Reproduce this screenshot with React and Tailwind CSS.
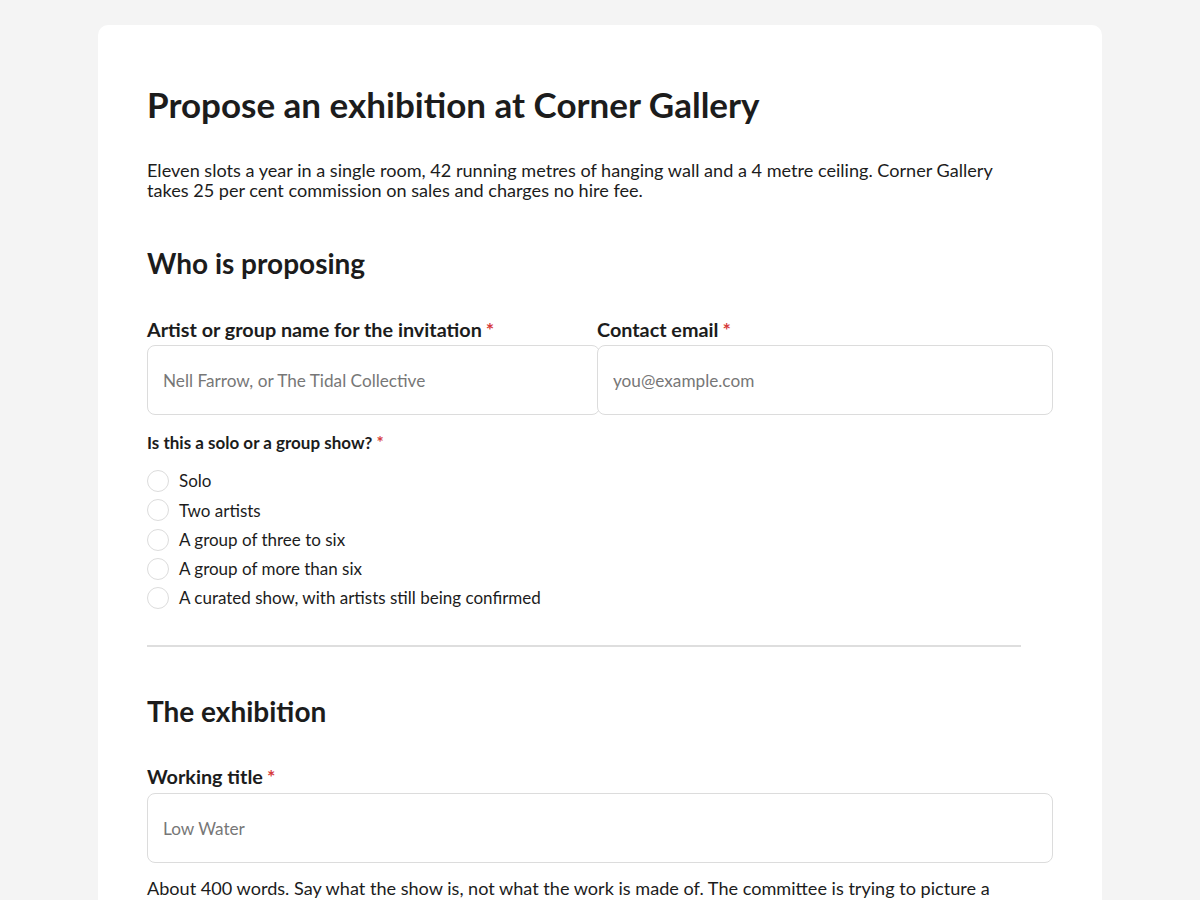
import React from "react";

function Req() {
  return <span className="text-[#d63b3b] ml-1">*</span>;
}

function Field({ label, placeholder, className, gapClass = "mb-[4px]" }) {
  return (
    <div className={className}>
      <label className={`block text-[19.8px] font-bold leading-[23px] ${gapClass}`}>
        {label}
        <Req />
      </label>
      <input
        type="text"
        placeholder={placeholder}
        className="block w-full h-[70px] rounded-[8px] border border-[#dcdcdc] bg-white px-[15px] text-[17.2px] text-[#1c1c1c] placeholder:text-[#777777] focus:outline-none"
      />
    </div>
  );
}

const options = [
  "Solo",
  "Two artists",
  "A group of three to six",
  "A group of more than six",
  "A curated show, with artists still being confirmed",
];

function App() {
  return (
    <div
      className="min-h-screen bg-[#f4f4f4] pt-[25px] text-[#1c1c1c]"
      style={{ fontFamily: "Lato, 'Liberation Sans', sans-serif" }}
    >
      <div className="mx-auto w-[1004px] rounded-[10px] bg-white px-[49px] pt-[58px] pb-16 min-h-[900px]">
        <h1 className="text-[35px] font-bold leading-[42px]">
          Propose an exhibition at Corner Gallery
        </h1>
        <p className="mt-[35px] max-w-[874px] text-[18.1px] leading-[20px]">
          Eleven slots a year in a single room, 42 running metres of hanging wall and a 4 metre ceiling. Corner
          Gallery takes 25 per cent commission on sales and charges no hire fee.
        </p>

        <h2 className="mt-[45px] text-[28px] font-bold leading-[36px]">
          Who is proposing
        </h2>

        <div className="mt-[37px] flex">
          <Field
            className="w-[450px] [&_input]:w-[453px] [&_input]:relative"
            label="Artist or group name for the invitation"
            placeholder="Nell Farrow, or The Tidal Collective"
          />
          <Field
            className="flex-1 relative z-10"
            label="Contact email"
            placeholder="you@example.com"
          />
        </div>

        <fieldset className="mt-[18px]">
          <legend className="text-[17px] font-bold leading-[20px]">
            Is this a solo or a group show?
            <Req />
          </legend>
          <div className="mt-[17px] flex flex-col gap-[7.3px]">
            {options.map((o) => (
              <label key={o} className="flex items-center gap-[10px] h-[22px] text-[17px]">
                <span className="w-[22px] h-[22px] rounded-full border border-[#dcdcdc] bg-white shrink-0" />
                {o}
              </label>
            ))}
          </div>
        </fieldset>

        <div className="mt-[36px] h-[2px] w-[874px] bg-[#dedede]" />

        <h2 className="mt-[46px] text-[28px] font-bold leading-[36px]">
          The exhibition
        </h2>

        <Field
          className="mt-[36px]"
          gapClass="mb-[5px]"
          label="Working title"
          placeholder="Low Water"
        />

        <p className="mt-[15px] max-w-[874px] text-[18.1px] leading-[20px]">
          About 400 words. Say what the show is, not what the work is made of. The committee is trying to picture a
          room, so tell them what a visitor would see, hear and walk past.
        </p>
      </div>
    </div>
  );
}

export default App;
